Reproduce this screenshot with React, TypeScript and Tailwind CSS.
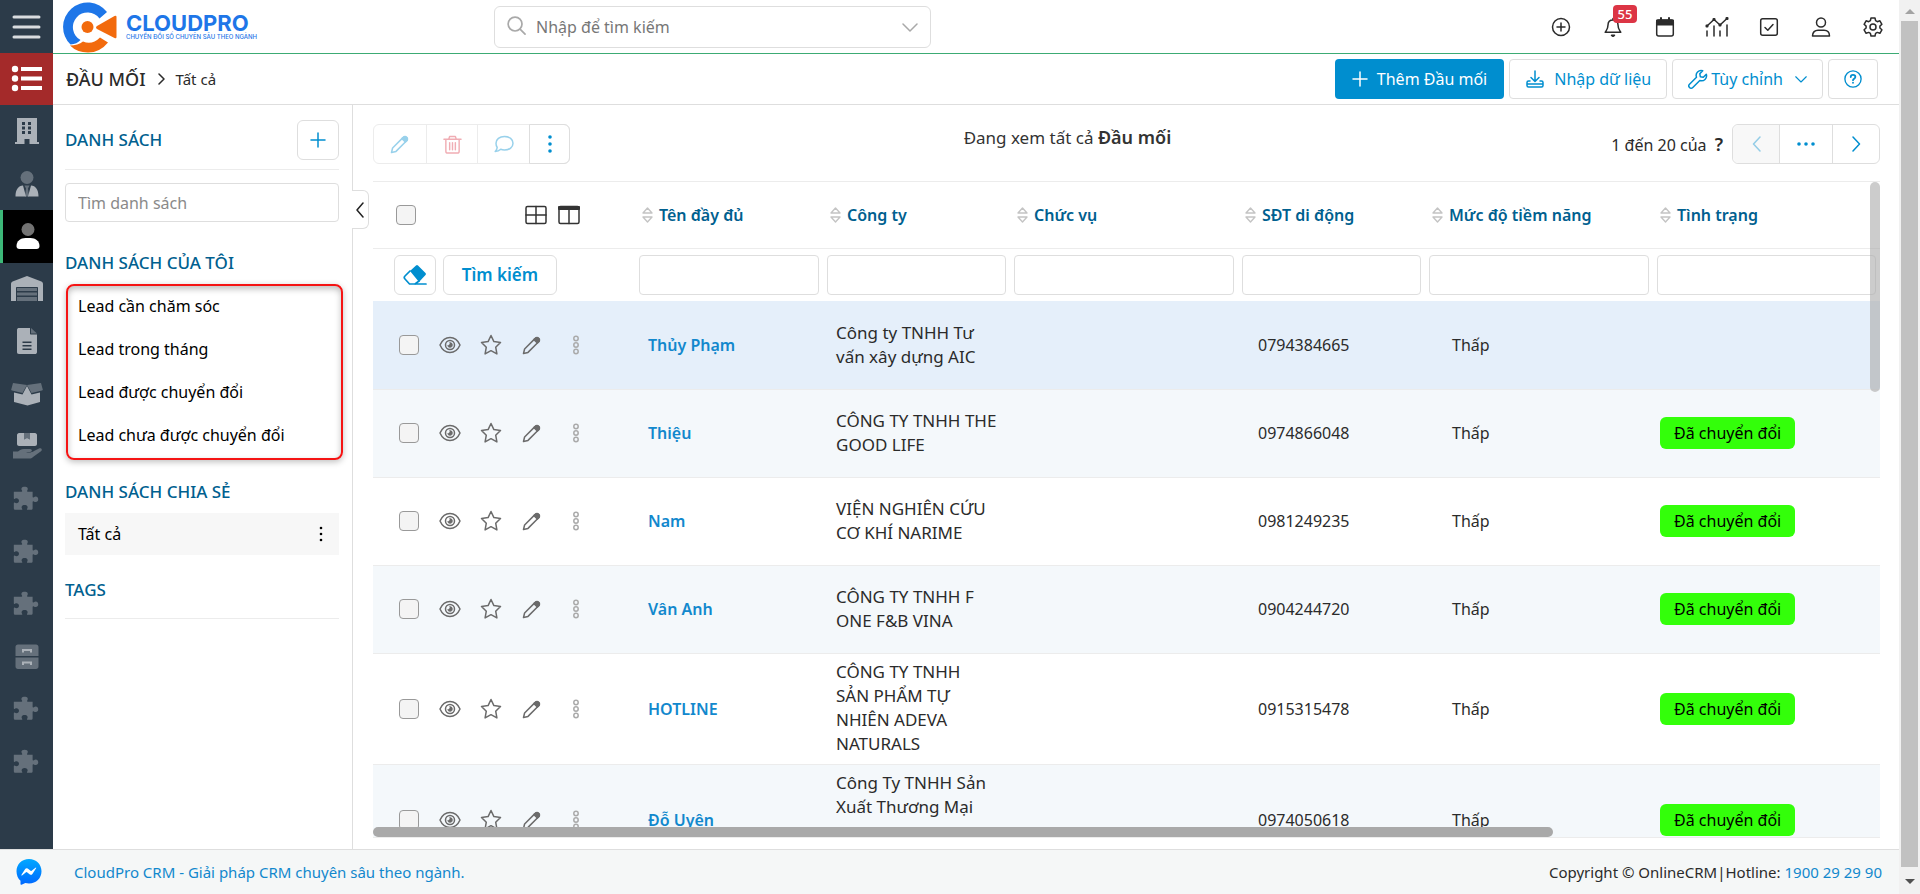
import { Fragment, useState } from 'react';
import type { ReactNode } from 'react';

type Lead = {
  name: string;
  company: string;
  phone: string;
  level: string;
  converted: boolean;
  tall?: boolean;
};

const leads: Lead[] = [
  { name: 'Thủy Phạm', company: 'Công ty TNHH Tư\nvấn xây dựng AIC', phone: '0794384665', level: 'Thấp', converted: false },
  { name: 'Thiệu', company: 'CÔNG TY TNHH THE\nGOOD LIFE', phone: '0974866048', level: 'Thấp', converted: true },
  { name: 'Nam', company: 'VIỆN NGHIÊN CỨU\nCƠ KHÍ NARIME', phone: '0981249235', level: 'Thấp', converted: true },
  { name: 'Vân Anh', company: 'CÔNG TY TNHH F\nONE F&B VINA', phone: '0904244720', level: 'Thấp', converted: true },
  { name: 'HOTLINE', company: 'CÔNG TY TNHH\nSẢN PHẨM TỰ\nNHIÊN ADEVA\nNATURALS', phone: '0915315478', level: 'Thấp', converted: true, tall: true },
  { name: 'Đỗ Uyên', company: 'Công Ty TNHH Sản\nXuất Thương Mại', phone: '0974050618', level: 'Thấp', converted: true, tall: true },
];

const columns = ['Tên đầy đủ', 'Công ty', 'Chức vụ', 'SĐT di động', 'Mức độ tiềm năng', 'Tình trạng'];
const myLists = ['Lead cần chăm sóc', 'Lead trong tháng', 'Lead được chuyển đổi', 'Lead chưa được chuyển đổi'];

type IconProps = { className?: string; children?: ReactNode; box?: string };

// outline icon base
function Line({ className = 'size-5', children, box = '0 0 20 20' }: IconProps) {
  return (
    <svg className={className} viewBox={box} fill="none" stroke="currentColor" strokeWidth="1.5" strokeLinecap="round" strokeLinejoin="round" aria-hidden="true">
      {children}
    </svg>
  );
}

// filled icon base
function Solid({ className = 'size-8', children, box = '0 0 32 32' }: IconProps) {
  return (
    <svg className={className} viewBox={box} fill="currentColor" aria-hidden="true">
      {children}
    </svg>
  );
}

const Pencil = ({ className }: IconProps) => (
  <Line className={className}>
    <path d="M1.5 18.5 2.6 14 13.2 3.4a2.2 2.2 0 0 1 3.2 0l.2.2a2.2 2.2 0 0 1 0 3.2L6 17.4Z" />
    <path d="m12 4.6 1.4-1.4a2.2 2.2 0 0 1 3.2 0l.2.2a2.2 2.2 0 0 1 0 3.2L15.4 8Z" fill="currentColor" />
  </Line>
);

const Eye = () => (
  <Line className="size-[22px]" box="0 0 22 22">
    <path d="M1 11C3 6.5 6.5 3.5 11 3.5S19 6.5 21 11c-2 4.5-5.5 7.5-10 7.5S3 15.5 1 11Z" />
    <circle cx="11" cy="11" r="4.5" />
    <path d="M11 8.5a2.5 2.5 0 1 1-2.4 3c1.4.2 2.6-1.4 2.4-3Z" fill="currentColor" strokeWidth=".5" />
  </Line>
);

const Star = () => (
  <Line className="size-[22px]" box="0 0 22 22">
    <path d="m11 1.5 2.9 6.1 6.6.9-4.8 4.7 1.2 6.700L11 16.700l-5.900 3.200 1.200-6.700L1.500 8.500l6.600-.9Z" />
  </Line>
);

const ChevronDown = ({ className = 'w-4 h-4' }: IconProps) => (
  <Line className={className} box="0 0 16 16"><path d="m1 5 7 7 7-7" /></Line>
);

const Sort = () => (
  <svg className="w-[11px] h-4 shrink-0" viewBox="0 0 11 16" fill="none" stroke="#c4c4c4" strokeWidth="1.4" strokeLinejoin="round" aria-hidden="true">
    <path d="M5.5 1 10 6H1ZM5.5 15 10 10H1Z" />
  </svg>
);

const Puzzle = () => (
  <Solid>
    <path className="opacity-45" d="M3 11.500h8.200c.8 0 .9-.6.5-1.300-1.500-2.600 0-4.200 2.800-4.200s4.300 1.600 2.800 4.200c-.4.7-.3 1.300.5 1.300H23v5.200c0 .8.600 1 1.300.5 2.300-1.500 4.700-.2 4.700 2.300s-2.400 3.800-4.700 2.300c-.7-.5-1.300-.3-1.300.5V29c0 1-.7 1.700-1.700 1.700h-3.600c-.8 0-1-.6-.5-1.200 1.200-1.800.2-4-2.700-4s-3.900 2.200-2.700 4c.5.6.3 1.200-.5 1.200H4.700c-1 0-1.700-.7-1.700-1.700v-5.300c0-.8.600-.9 1.200-.5 2 1.200 4.300.1 4.300-2.200s-2.300-3.400-4.300-2.200c-.6.4-1.200.3-1.200-.5Z" transform="translate(0 -2) scale(.94)" />
  </Solid>
);

const Logo = () => (
  <svg className="w-[54px] h-[52px]" viewBox="0 0 54 52" aria-hidden="true">
    <path d="M7.5 43.5A24.500 24.500 0 1 1 44 11l-7.500 6.500A14.700 14.700 0 1 0 17.500 39Q14 43 7.500 43.5Z" fill="#1e76e8" />
    <path d="M7 44.500q8 0 13-4 9 4 17-4l8 5Q37 51.500 25 51.500 14 51.500 7 44.500Z" fill="#f26a0d" />
    <circle cx="24.5" cy="26" r="6" fill="#f26a0d" />
    <path d="M34 25 51.5 15q2-1 2 1v20q0 2-2 1L34 28q-2-1.500 0-3Z" fill="#f26a0d" />
  </svg>
);

const railItems: { label: string; icon: ReactNode }[] = [
  { label: 'Tổ chức', icon: <Solid><path fillRule="evenodd" d="M6 3h20v24h2v2H18.500v-5h-5v5H4v-2h2ZM11 7v3h3V7Zm6 0v3h3V7Zm-6 4.500v3h3v-3Zm6 0v3h3v-3ZM11 16v3h3v-3Zm6 0v3h3v-3Z" /></Solid> },
  { label: 'Người liên hệ', icon: <Solid><circle className="opacity-45" cx="16" cy="9.500" r="6.500" /><path d="M4.500 28.500c0-7 3-11 7.500-11l3 11ZM27.500 28.500c0-7-3-11-7.500-11l-3 11Z" /><path className="opacity-45" d="M13.500 17.500h5l-1.500 3 1 8h-4l1-8Z" /></Solid> },
  { label: 'Đầu mối', icon: <Solid><circle className="opacity-45" cx="16" cy="9.500" r="6.500" /><path d="M4.500 26c0-5 4-8 9-8h5c5 0 9 3 9 8 0 2-1 3-3 3h-17c-2 0-3-1-3-3Z" /></Solid> },
  { label: 'Kho', icon: <Solid><path d="M0 28V11c0-1 .6-2 1.600-2.400L16 3l14.400 5.600C31.400 9 32 10 32 11v17H27V15c0-.6-.4-1-1-1H6c-.6 0-1 .4-1 1v13Z" /><path className="opacity-45" d="M6 15h20v3H6Zm0 4.500h20v3H6ZM6 24h20v4H6Z" /></Solid> },
  { label: 'Tài liệu', icon: <Solid><path fillRule="evenodd" d="M8 3h11v5.500c0 .6.400 1 1 1h6V27c0 1.500-1 2-2 2H8c-1.500 0-2-1-2-2V5c0-1.500 1-2 2-2Zm3.500 13.500V18h9v-1.500Zm0 3.500v1.500h9V20Zm0 3.500V25h9v-1.500Z" /><path className="opacity-45" d="m20 3 6 5.500h-6Z" /></Solid> },
  { label: 'Sản phẩm', icon: <Solid><path className="opacity-45" d="m2 5 14 2-4.500 8L1 12.500c-.7-.2-1-.7-.7-1.300Zm28 0L16 7l4.500 8L31 12.500c.7-.2 1-.7.700-1.300Z" /><path d="M3 14.500 11.500 16.500 16 8l4.500 8.500 8.500-2V24l-12.500 3.500L3 24Z" /></Solid> },
  { label: 'Bàn giao', icon: <Solid><path d="M6 5c0-1 1-2 2-2h5v6.500L16 8l3 1.500V3h5c1 0 2 1 2 2v9c0 1-1 2-2 2H8c-1 0-2-1-2-2Z" /><path className="opacity-45" d="M13 3h6v6.500L16 8l-3 1.500ZM2 21.500h5c3-2.500 5-2.500 8-2.500h4c2.500 0 2.500 3 0 3h-4c3 1 6 .5 8-1l5-2.500c2-1 4 1 2 2.800L22 27c-1 1-2 1.500-4 1.500H2Z" /></Solid> },
  { label: 'Mô-đun 1', icon: <Puzzle /> },
  { label: 'Mô-đun 2', icon: <Puzzle /> },
  { label: 'Mô-đun 3', icon: <Puzzle /> },
  { label: 'Lưu trữ', icon: <Solid><path className="opacity-45" d="M7 3.500h18c1.500 0 2.500 1 2.500 2.500v9h-23V6c0-1.500 1-2.500 2.500-2.500ZM4.500 16.500h23v9c0 1.500-1 2.500-2.500 2.500H7c-1.500 0-2.500-1-2.500-2.500Z" /><path d="M11 8h10v3.500h-2V10h-6v1.500h-2Zm0 12.500h10V24h-2v-1.500h-6V24h-2Z" /></Solid> },
  { label: 'Mô-đun 4', icon: <Puzzle /> },
  { label: 'Mô-đun 5', icon: <Puzzle /> },
];

const headerIcons: { label: string; icon: ReactNode; badge?: string }[] = [
  { label: 'Tạo nhanh', icon: <Line><circle cx="10" cy="10" r="8.500" /><path d="M10 6v8M6 10h8" /></Line> },
  { label: 'Thông báo', badge: '55', icon: <Line><path d="M10 1.500v1.300M10 3C6.500 3 5 5.500 5 8c0 4-1.500 5-2.800 7.300h15.600C16.500 13 15 12 15 8c0-2.500-1.500-5-5-5Z" /><path d="M8.500 18.300h3L10 19.300Z" fill="currentColor" /></Line> },
  { label: 'Lịch', icon: <Line><rect x="1.700" y="3" width="16.600" height="16" rx="2" /><path d="M2 3.500h16v4H2ZM6 1v3M14 1v3" fill="currentColor" strokeWidth="2" /></Line> },
  { label: 'Báo cáo', icon: <Line className="w-6 h-5" box="0 0 24 20"><path d="m2 9 7-6.500 6 5.500 7-6.500M2 14v5M9 9v10M15 14v5M22 8v11" /><path d="M1.500 8.500h1v1h-1ZM8.500 2h1v1h-1ZM14.500 7.500h1v1h-1ZM21.500 1h1v1h-1Z" fill="currentColor" strokeWidth="2" /></Line> },
  { label: 'Công việc', icon: <Line><rect x="1.700" y="1.700" width="16.600" height="16.600" rx="2" /><path d="m6 10.500 2.800 2.700L14 7.500" /></Line> },
  { label: 'Tài khoản', icon: <Line><circle cx="10" cy="5.500" r="4.500" /><path d="M1.500 19c0-4 2.500-5.800 5.500-5.800h6c3 0 5.500 1.800 5.500 5.800Z" /></Line> },
  { label: 'Cài đặt', icon: <Line><circle cx="10" cy="10" r="3" /><path d="M8 1h4l.6 2.700 1.700 1 2.600-.9 2 3.500-2 1.800v1.900l2 1.800-2 3.500-2.600-.9-1.700 1L12 19H8l-.6-2.600-1.700-1-2.600.9-2-3.500 2-1.800V9.100l-2-1.800 2-3.500 2.600.9 1.700-1Z" /></Line> },
];

function Rail() {
  return (
    <nav aria-label="Menu chính" className="w-[53px] shrink-0 flex flex-col bg-[#2c3b49] pb-[61px] text-[#abb1b8]">
      <button aria-label="Mở menu" className="h-[53px] shrink-0 flex items-center justify-center text-[#d9dcdf]">
        <Line className="w-8 h-6" box="0 0 32 24">
          <path d="M3 2h25M3 12h25M3 22h25" strokeWidth="3" />
        </Line>
      </button>
      <button aria-label="Danh mục" className="h-[52px] shrink-0 flex items-center justify-center bg-[#a42a2a] text-white">
        <Solid className="w-8 h-7" box="0 0 32 28">
          <circle cx="4" cy="4" r="3.200" /><circle cx="4" cy="13.500" r="3.200" /><circle cx="4" cy="23" r="3.200" />
          <path d="M10 2h21v4H10ZM10 11.500h21v4H10ZM10 21h21v4H10Z" />
        </Solid>
      </button>
      <ul className="flex-1 flex flex-col">
        {railItems.map((item, i) => (
          <li key={item.label} className="flex-1">
            <a
              href="#"
              aria-label={item.label}
              className={
                i === 2
                  ? 'h-full flex items-center justify-center bg-black text-white border-l-3 border-[#3cb878]'
                  : 'h-full flex items-center justify-center'
              }
            >
              {item.icon}
            </a>
          </li>
        ))}
      </ul>
    </nav>
  );
}

function Header() {
  return (
    <header className="h-[54px] shrink-0 flex items-center border-b border-[#3cab74]">
      <a href="#" className="w-[441px] shrink-0 flex items-center gap-[9px] pl-[10px] text-[#1e76e8] font-['Inter',sans-serif]">
        <Logo />
        <span className="flex flex-col">
          <span className="text-[22px] leading-5 font-bold">CLOUDPRO</span>
          <span className="text-[6px] leading-2 font-medium">CHUYỂN ĐỔI SỐ CHUYÊN SÂU THEO NGÀNH</span>
        </span>
      </a>
      <label className="w-[437px] h-[42px] flex items-center gap-[10px] px-3 border border-[#dedede] rounded-md text-[#a9a9a9]">
        <Line className="size-[19px] mb-[3px] shrink-0"><circle cx="8.500" cy="8.500" r="7.300" strokeWidth="1.800" /><path d="m14 14 5 5" strokeWidth="1.800" /></Line>
        <input aria-label="Nhập để tìm kiếm" placeholder="Nhập để tìm kiếm" className="flex-1 min-w-0 text-base outline-none placeholder:text-[#777]" />
        <ChevronDown />
      </label>
      <div className="ml-auto flex text-[#2b2b2b]">
        {headerIcons.map((item) => (
          <button key={item.label} aria-label={item.label} className="relative w-[52px] h-10 flex items-center justify-center">
            {item.icon}
            {item.badge && (
              <span className="absolute left-[26px] -top-[2px] w-6 h-[18px] rounded bg-[#dc3545] text-white text-[13px] leading-[18px] font-medium">{item.badge}</span>
            )}
          </button>
        ))}
      </div>
    </header>
  );
}

function ModuleBar() {
  return (
    <div className="h-[51px] shrink-0 flex items-center pl-[13px] pr-[21px] border-b border-[#dedede]">
      <h1 className="text-[18px] font-medium text-[#2b2b2b]">ĐẦU MỐI</h1>
      <Line className="w-2 h-3 mx-[11px] text-[#2b2b2b]" box="0 0 8 12"><path d="m2 1 5 5-5 5" /></Line>
      <span className="text-[15px]">Tất cả</span>
      <div className="ml-auto flex gap-[5px] text-[#008ecf]">
        <button className="h-10 px-[17px] flex items-center gap-[9px] rounded bg-[#008ecf] text-white">
          <Line className="size-4" box="0 0 16 16"><path d="M8 1v14M1 8h14" /></Line>
          Thêm Đầu mối
        </button>
        <button className="h-10 px-[15px] flex items-center gap-[9px] border border-[#dedede] rounded">
          <Line className="size-5"><path d="M10 2v10M6 8.500l4 4 4-4M5 12H3.500C2.500 12 2 12.500 2 13.500v3c0 1 .5 1.500 1.500 1.500h13c1 0 1.500-.5 1.500-1.500v-3c0-1-.5-1.500-1.500-1.500H15M3 15h14" /></Line>
          Nhập dữ liệu
        </button>
        <button className="h-10 px-[15px] flex items-center border border-[#dedede] rounded">
          <Line className="size-5 mr-[3px]"><path d="M18.300 5.300a5 5 0 0 1-6.500 6.200l-7 7a2.300 2.300 0 0 1-3.300-3.300l7-7a5 5 0 0 1 6.200-6.500l-2.900 3 .5 3 3 .5Z" /></Line>
          Tùy chỉnh
          <ChevronDown className="w-3 h-3 ml-3" />
        </button>
        <button aria-label="Trợ giúp" className="w-[50px] h-10 flex items-center justify-center border border-[#dedede] rounded">
          <Line className="size-[18px]"><circle cx="10" cy="10" r="9" /><path d="M7.500 7.800C7.500 6.300 8.600 5.500 10 5.500s2.600.9 2.600 2.200c0 1.900-2.600 1.900-2.600 3.600M10 14v.3" strokeWidth="2" /></Line>
        </button>
      </div>
    </div>
  );
}

function ListSidebar() {
  const heading = 'text-[17px] leading-6 font-medium text-[#00608f]';
  return (
    <aside className="relative w-[300px] shrink-0 pl-3 pr-[13px] pt-[15px] border-r border-[#dedede]">
      <div className="flex items-center justify-between pb-[9px] border-b border-[#ececec]">
        <h2 className={heading}>DANH SÁCH</h2>
        <button aria-label="Thêm danh sách" className="w-[42px] h-10 flex items-center justify-center border border-[#dedede] rounded-md text-[#008ecf]">
          <Line className="size-4" box="0 0 16 16"><path d="M8 1v14M1 8h14" /></Line>
        </button>
      </div>
      <input aria-label="Tìm danh sách" placeholder="Tìm danh sách" className="w-full h-[39px] mt-[13px] px-3 border border-[#dedede] rounded text-base outline-none placeholder:text-[#8a8a8a]" />
      <h2 className={`${heading} mt-[29px]`}>DANH SÁCH CỦA TÔI</h2>
      <ul className="w-[277px] ml-px mt-[9px] pl-[10px] rounded-lg border-2 border-[#f51414] text-black shadow-[0_2px_6px_rgba(0,0,0,0.25),inset_0_3px_6px_rgba(0,0,0,0.25)]">
        {myLists.map((item) => (
          <li key={item}>
            <a href="#" className="block pt-2 pb-[11px] leading-6">{item}</a>
          </li>
        ))}
      </ul>
      <h2 className={`${heading} mt-5`}>DANH SÁCH CHIA SẺ</h2>
      <div className="h-[42px] mt-[9px] pl-[13px] pr-[14px] flex items-center justify-between bg-[#f7f7f7] text-black">
        <a href="#">Tất cả</a>
        <button aria-label="Tùy chọn danh sách">
          <Solid className="w-2 h-4" box="0 0 8 16"><circle cx="4" cy="2" r="1.300" /><circle cx="4" cy="8" r="1.300" /><circle cx="4" cy="14" r="1.300" /></Solid>
        </button>
      </div>
      <h2 className={`${heading} mt-[23px] pb-4 border-b border-[#ececec]`}>TAGS</h2>
      <button aria-label="Thu gọn" className="absolute top-[85px] left-full w-[17px] h-[39px] flex items-center justify-center bg-white border border-l-0 border-[#dedede] rounded-r-md text-[#222]">
        <Line className="w-2 h-4" box="0 0 8 16"><path d="M7 1 1 8l6 7" /></Line>
      </button>
    </aside>
  );
}

function Toolbar() {
  return (
    <div className="h-[77px] flex items-start justify-between pt-[19px] border-b border-[#ececec]">
      <div className="flex-[5] flex">
        <div className="flex h-10 border border-[#ececec] rounded-md text-[#008ecf]">
          <button disabled aria-label="Sửa" className="w-[53px] flex items-center justify-center border-r border-[#ececec]"><Pencil className="size-5 opacity-40" /></button>
          <button disabled aria-label="Xóa" className="w-[51px] flex items-center justify-center border-r border-[#ececec] text-[#dc3545]">
            <Line className="size-[19px] opacity-40"><path d="M1 4.500h18M6 4.500l1-3h6l1 3M3 4.500V17c0 1.300.7 2 2 2h10c1.300 0 2-.7 2-2V4.500M7 8v7.500M10 8v7.500M13 8v7.500" /></Line>
          </button>
          <button disabled aria-label="Nhắn tin" className="w-[52px] flex items-center justify-center">
            <Line className="size-5 opacity-40"><path d="M10.500 2.500c5 0 8.500 2.800 8.500 6.700s-3.500 6.800-8.500 6.800c-1.400 0-2.700-.2-3.800-.7C5.500 16.500 3.500 17.500 1.200 17.500c1-1 1.900-2.600 2-4C2.400 12.300 2 10.800 2 9.200c0-3.900 3.500-6.700 8.500-6.700Z" /></Line>
          </button>
          <button aria-label="Thêm tùy chọn" className="w-[41px] -m-px flex items-center justify-center border border-[#dedede] rounded-r-md">
            <Solid className="w-1 h-5" box="0 0 4 20"><circle cx="2" cy="3" r="1.800" /><circle cx="2" cy="10" r="1.800" /><circle cx="2" cy="17" r="1.800" /></Solid>
          </button>
        </div>
      </div>
      <p className="text-[17px] leading-[26px] text-[#333]">Đang xem tất cả <b className="text-[18px] font-semibold">Đầu mối</b></p>
      <div className="flex-[6] flex items-center justify-end">
        <span>1 đến 20 của <b className="ml-1 text-[18px] font-semibold">?</b></span>
        <div className="ml-[9px] flex h-10 border border-[#dedede] rounded-md text-[#008ecf]">
          <button disabled aria-label="Trang trước" className="w-[47px] flex items-center justify-center bg-[#f8f8f8] border-r border-[#dedede] rounded-l-md">
            <Line className="w-[9px] h-4 opacity-40" box="0 0 9 16"><path d="M8 1 1.500 8 8 15" /></Line>
          </button>
          <button aria-label="Chọn trang" className="w-[53px] flex items-center justify-center border-r border-[#dedede]">
            <Solid className="w-5 h-1" box="0 0 20 4"><circle cx="3" cy="2" r="1.800" /><circle cx="10" cy="2" r="1.800" /><circle cx="17" cy="2" r="1.800" /></Solid>
          </button>
          <button aria-label="Trang sau" className="w-[46px] flex items-center justify-center">
            <Line className="w-[9px] h-4" box="0 0 9 16"><path d="m1 1 6.500 7L1 15" /></Line>
          </button>
        </div>
      </div>
    </div>
  );
}

const checkboxClass = 'appearance-none block size-5 shrink-0 rounded border border-[#999] bg-[#f4f4f4]';

function LeadTable() {
  const [checked, setChecked] = useState<string[]>([]);

  const toggle = (name: string) => {
    setChecked(checked.includes(name) ? checked.filter((n) => n !== name) : [...checked, name]);
  };

  return (
    <div className="relative flex-1 min-h-0 overflow-hidden border-b border-[#ececec]">
      <table className="w-full table-fixed border-collapse text-left">
        <colgroup>
          <col className="w-[262px]" />
          <col className="w-[188px]" />
          <col className="w-[187px]" />
          <col className="w-[228px]" />
          <col className="w-[187px]" />
          <col className="w-[228px]" />
          <col className="w-[227px]" />
        </colgroup>
        <thead>
          <tr className="h-[66px] border-b border-[#ececec]">
            <td className="pl-[23px] pr-[55px]">
              <div className="flex items-center text-[#333]">
                <input type="checkbox" aria-label="Chọn tất cả" className={checkboxClass} />
                <button aria-label="Dạng lưới" className="ml-auto">
                  <Line className="w-[22px] h-5" box="0 0 22 20"><rect x="1" y="1.500" width="20" height="17" rx="1.500" /><path d="M11 1.500v17M1 10h20" /></Line>
                </button>
                <button aria-label="Chọn cột" className="ml-[11px]">
                  <Line className="w-[22px] h-5" box="0 0 22 20"><rect x="1" y="1.500" width="20" height="17" rx="1.500" /><path d="M11 4v14.500" /><path d="M1 2h20v2H1Z" strokeWidth="2" fill="currentColor" /></Line>
                </button>
              </div>
            </td>
            {columns.map((col) => (
              <th key={col} scope="col" className="pl-[7px] pt-px font-semibold text-[#00608f]">
                <span className="flex items-center gap-[6px]"><Sort />{col}</span>
              </th>
            ))}
          </tr>
          <tr className="h-[53px]">
            <td className="pl-[21px]">
              <div className="flex gap-[7px] text-[#008ecf]">
                <button aria-label="Xóa bộ lọc" className="w-[42px] h-10 flex items-center justify-center border border-[#dedede] rounded-md">
                  <Solid className="w-6 h-[22px]" box="0 0 24 22"><path d="m7 7 6-5.500q1-1 2 0L22.500 9q1 1 0 2L16 18Z" /><path d="m7 7-5 5q-1.500 1.500 0 3l4.500 5H23M12 20l4-3" fill="none" stroke="currentColor" strokeWidth="1.700" strokeLinecap="round" /></Solid>
                </button>
                <button className="w-[114px] h-10 border border-[#dedede] rounded-md text-[17px] font-semibold">Tìm kiếm</button>
              </div>
            </td>
            {columns.map((col) => (
              <td key={col} className="px-1">
                <input aria-label={`Lọc ${col}`} className="block w-full h-10 px-2 border border-[#dedede] rounded outline-none" />
              </td>
            ))}
          </tr>
        </thead>
        <tbody>
          {leads.map((lead, i) => (
            <tr
              key={lead.name}
              className={`${lead.tall ? 'h-[111px]' : 'h-[88px]'} border-b border-[#ececec] ${i === 0 ? 'bg-[#e5effa]' : i % 2 ? 'bg-[#f4f8fb]' : 'bg-white'}`}
            >
              <td className="pl-[26px]">
                <div className="flex items-center text-[#6b6b6b]">
                  <input type="checkbox" aria-label={`Chọn ${lead.name}`} checked={checked.includes(lead.name)} onChange={() => toggle(lead.name)} className={checkboxClass} />
                  <button aria-label="Xem" className="ml-5"><Eye /></button>
                  <button aria-label="Theo dõi" className="ml-[19px]"><Star /></button>
                  <button aria-label="Sửa" className="ml-5"><Pencil className="size-5" /></button>
                  <button aria-label="Thêm" className="ml-[30px] text-[#aaa]">
                    <Line className="w-2 h-5" box="0 0 8 20"><circle cx="4" cy="3.500" r="2.200" /><circle cx="4" cy="10" r="2.200" /><circle cx="4" cy="16.500" r="2.200" /></Line>
                  </button>
                </div>
              </td>
              <td className="pl-[13px]"><a href="#" className="font-semibold text-[#1288cd]">{lead.name}</a></td>
              <td className={lead.tall ? 'pl-[13px] py-[6px] align-top text-[17px]' : 'pl-[13px] text-[17px]'}>
                {lead.company.split('\n').map((line) => (
                  <Fragment key={line}>{line}<br /></Fragment>
                ))}
              </td>
              <td></td>
              <td className="pl-5">{lead.phone}</td>
              <td className="pl-[27px]">{lead.level}</td>
              <td className="pl-[7px]">
                {lead.converted && <span className="inline-block h-8 px-[14px] rounded-md bg-[#33ff0a] leading-8 text-black">Đã chuyển đổi</span>}
              </td>
            </tr>
          ))}
        </tbody>
      </table>
      {/* scrollbar thumbs sit over the rows */}
      <div className="absolute left-0 bottom-0 w-[78.3%] h-[10px] rounded-md bg-[#a9a9a9]"></div>
      <div className="absolute right-0 top-0 w-[10px] h-[210px] rounded-md bg-[#aaa]/60"></div>
    </div>
  );
}

function Footer() {
  return (
    <footer className="h-[45px] shrink-0 flex items-center pl-4 pr-[17px] border-t border-[#dedede] bg-[#f5f7f7] text-[15px]">
      <a href="#" aria-label="Messenger">
        <svg className="size-[26px]" viewBox="0 0 26 26" aria-hidden="true">
          <defs>
            <linearGradient id="messenger" x1="0" y1="0" x2="0" y2="1">
              <stop offset="0" stopColor="#00a8ff" />
              <stop offset="1" stopColor="#0068ff" />
            </linearGradient>
          </defs>
          <path d="M13 0c7.200 0 12.500 5.300 12.500 12.200S20.200 24.500 13 24.500c-1.300 0-2.500-.2-3.700-.5L5.500 25.700q-1 .3-1-.7V21.700C2 19.500.5 16.200.5 12.200.5 5.300 5.800 0 13 0Z" fill="url(#messenger)" />
          <path d="m5.500 15.800 3.700-5.800q1-1.500 2.500-.4l2.900 2.100q.5.400 1 0l3.900-3q1-.6.600.6L16.400 15q-1 1.500-2.500.4L11 13.200q-.5-.3-1 0L6 16.400q-1 .6-.5-.6Z" fill="#fff" />
        </svg>
      </a>
      <a href="#" className="ml-8 text-[#1288cd]">CloudPro CRM - Giải pháp CRM chuyên sâu theo ngành.</a>
      <p className="ml-auto">Copyright © OnlineCRM|Hotline: <a href="#" className="text-[#1288cd]">1900 29 29 90</a></p>
    </footer>
  );
}

function App() {
  return (
    <div className="h-screen flex overflow-hidden bg-white font-['Noto_Sans','Open_Sans',sans-serif] text-base leading-6 text-[#2b2b2b]">
      <div className="flex-1 min-w-0 flex flex-col">
        <div className="flex-1 min-h-0 flex">
          <Rail />
          <div className="flex-1 min-w-0 flex flex-col">
            <Header />
            <ModuleBar />
            <div className="flex-1 min-h-0 flex">
              <ListSidebar />
              <main className="flex-1 min-w-0 flex flex-col pl-5 pr-[19px] pb-[11px]">
                <Toolbar />
                <LeadTable />
              </main>
            </div>
          </div>
        </div>
        <Footer />
      </div>
      {/* page scrollbar */}
      <div className="w-[21px] shrink-0 flex flex-col items-center justify-between bg-[#f1f1f1]">
        <svg className="w-[10px] h-[21px]" viewBox="0 0 10 21" aria-hidden="true"><path d="m0 14 5-5 5 5Z" fill="#a3a3a3" /></svg>
        <div className="flex-1 w-[17px] bg-[#c1c1c1]"></div>
        <svg className="w-[10px] h-[27px]" viewBox="0 0 10 27" aria-hidden="true"><path d="m0 12 5 5 5-5Z" fill="#505050" /></svg>
      </div>
    </div>
  );
}

export default App;
